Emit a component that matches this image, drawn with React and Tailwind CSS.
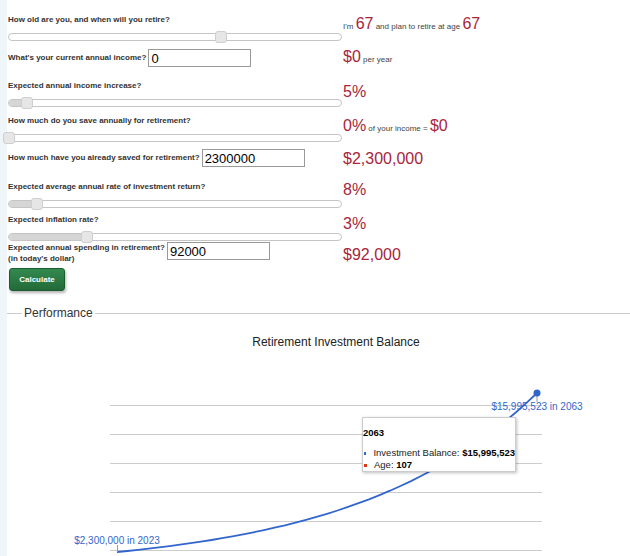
import { useState } from "react";

const red = "text-[#a8253b]";

const Slider = ({ fill = 0, thumb }) => (
  <div className="relative h-[8px] w-[334px] rounded-[4px] border border-[#c5c5c5] bg-white">
    {fill > 0 && <div className="absolute left-0 top-0 h-full rounded-l-[4px] bg-[#d6d6d6]" style={{ width: fill }} />}
    <div
      className="absolute top-[-3px] h-[12px] w-[12px] rounded-[3px] border border-[#cfcfcf] bg-[#e6e6e6]"
      style={{ left: thumb }}
    />
  </div>
);

const Label = ({ children, className = "" }) => (
  <div className={"text-[8px] font-bold leading-[10px] text-[#333] " + className}>{children}</div>
);

const Box = ({ value, width = 103 }) => (
  <input
    readOnly
    value={value}
    className="ml-[2px] h-[18px] border border-[#999] bg-white px-[2px] text-[13px] leading-[16px] text-black outline-none"
    style={{ width }}
  />
);

const Big = ({ children }) => <span className={"text-[16px] " + red}>{children}</span>;
const Small = ({ children }) => <span className="text-[8px] text-[#444]">{children}</span>;

const Chart = () => {
  const pts = [];
  for (let i = 0; i <= 40; i++) {
    const t = i / 40;
    const x = 110 + 420 * t;
    const y = 231 - (159 * (Math.exp(2.3 * t) - 1)) / (Math.exp(2.3) - 1);
    pts.push(`${x.toFixed(1)},${y.toFixed(1)}`);
  }
  const grid = [84, 113, 142, 171, 200, 229];
  return (
    <div className="relative h-[235px] w-[623px]">
      <svg width="623" height="235" className="block" style={{ fontFamily: '"Liberation Sans", Arial, sans-serif' }}>
        <text x="329" y="25" textAnchor="middle" fontSize="12" fill="#222">Retirement Investment Balance</text>
        {grid.map((y) => (
          <line key={y} x1="103" x2="535" y1={y + 0.5} y2={y + 0.5} stroke="#cccccc" strokeWidth="1" />
        ))}
        <polyline points={pts.join(" ")} fill="none" stroke="#3366cc" strokeWidth="1.8" />
        <line x1="530" x2="530" y1="72" y2="81" stroke="#999" strokeWidth="1" />
        <circle cx="530" cy="72" r="3.5" fill="#3366cc" />
        <text x="530" y="89" textAnchor="middle" fontSize="10" fill="#3366cc">$15,995,523 in 2063</text>
        <line x1="110.5" x2="110.5" y1="224" y2="231" stroke="#999" strokeWidth="1" />
        <text x="110" y="223" textAnchor="middle" fontSize="10" fill="#3366cc">$2,300,000 in 2023</text>
      </svg>
      <div className="absolute left-[355px] top-[96px] h-[55px] w-[154px] whitespace-nowrap border border-[#ccc] bg-white text-[9.5px] leading-[12px] text-[#222] shadow-[1px_1px_3px_rgba(0,0,0,0.25)]">
        <div className="mt-[9px] font-bold text-black">2063</div>
        <div className="mt-[8px] flex items-center">
          <span className="ml-[1px] mr-[7px] h-[3px] w-[3px] bg-[#3366cc]" />
          <span>Investment Balance: <b className="text-black">$15,995,523</b></span>
        </div>
        <div className="flex items-center">
          <span className="ml-[1px] mr-[7px] h-[3px] w-[3px] bg-[#dc3912]" />
          <span>Age: <b className="text-black">107</b></span>
        </div>
      </div>
    </div>
  );
};

const App = () => {
  const [income] = useState("0");
  return (
    <div className="flex min-h-screen w-[630px] bg-white" style={{ fontFamily: '"Liberation Sans", Arial, sans-serif' }}>
      <div className="w-[7px] shrink-0 bg-[#eef6fa]" />
      <div className="flex-1">
        <div className="pl-[1px]">
          {/* age */}
          <div className="flex">
            <div className="w-[334px]">
              <Label className="mt-[15px]">How old are you, and when will you retire?</Label>
              <div className="mt-[8px]"><Slider thumb={206} /></div>
            </div>
            <div className="mt-[15px] pl-[1px] leading-[17px]">
              <Small>I'm </Small><Big>67</Big><Small> and plan to retire at age </Small><Big>67</Big>
            </div>
          </div>

          {/* income */}
          <div className="mt-[8px] flex h-[18px] items-center">
            <div className="flex w-[334px] items-center">
              <Label>What's your current annual income?</Label>
              <Box value={income} />
            </div>
            <div className="pl-[1px] leading-[17px]">
              <Big>$0</Big><Small> per year</Small>
            </div>
          </div>

          {/* income increase */}
          <div className="flex">
            <div className="w-[334px]">
              <Label className="mt-[14px]">Expected annual income increase?</Label>
              <div className="mt-[8px]"><Slider fill={18} thumb={12} /></div>
            </div>
            <div className="mt-[16px] pl-[1px] leading-[17px]"><Big>5%</Big></div>
          </div>

          {/* save annually */}
          <div className="flex">
            <div className="w-[334px]">
              <Label className="mt-[9px]">How much do you save annually for retirement?</Label>
              <div className="mt-[8px]"><Slider thumb={-6} /></div>
            </div>
            <div className="mt-[10px] pl-[1px] leading-[17px]">
              <Big>0%</Big><Small> of your income = </Small><Big>$0</Big>
            </div>
          </div>

          {/* saved */}
          <div className="mt-[7px] flex h-[18px] items-center">
            <div className="flex w-[334px] items-center">
              <Label>How much have you already saved for retirement?</Label>
              <Box value="2300000" />
            </div>
            <div className="pl-[1px] leading-[17px]"><Big>$2,300,000</Big></div>
          </div>

          {/* return */}
          <div className="flex">
            <div className="w-[334px]">
              <Label className="mt-[15px]">Expected average annual rate of investment return?</Label>
              <div className="mt-[8px]"><Slider fill={28} thumb={22} /></div>
            </div>
            <div className="mt-[14px] pl-[1px] leading-[17px]"><Big>8%</Big></div>
          </div>

          {/* inflation */}
          <div className="flex">
            <div className="w-[334px]">
              <Label className="mt-[7px]">Expected inflation rate?</Label>
              <div className="mt-[8px]"><Slider fill={78} thumb={72} /></div>
            </div>
            <div className="mt-[7px] pl-[1px] leading-[17px]"><Big>3%</Big></div>
          </div>

          {/* spending */}
          <div className="mt-[1px] flex">
            <div className="flex w-[334px] items-start">
              <div className="text-[8px] font-bold leading-[11px] text-[#333]">
                Expected annual spending in retirement?<br />(in today's dollar)
              </div>
              <Box value="92000" />
            </div>
            <div className="mt-[4px] pl-[1px] leading-[17px]"><Big>$92,000</Big></div>
          </div>

          <button className="ml-[1px] mt-[4px] h-[23px] w-[56px] rounded-[3px] border border-[#1d5c31] bg-gradient-to-b from-[#338a4f] to-[#226a38] text-[8px] font-bold text-white shadow-[1px_2px_3px_rgba(0,0,0,0.3)]">
            Calculate
          </button>
        </div>

        {/* fieldset legend */}
        <div className="mt-[14px] flex h-[16px] items-center">
          <div className="h-px w-[15px] bg-[#ccc]" />
          <div className="px-[2px] text-[12px] leading-[16px] text-[#333]">Performance</div>
          <div className="h-px flex-1 bg-[#ccc]" />
        </div>

        <Chart />
      </div>
    </div>
  );
};

export default App;
